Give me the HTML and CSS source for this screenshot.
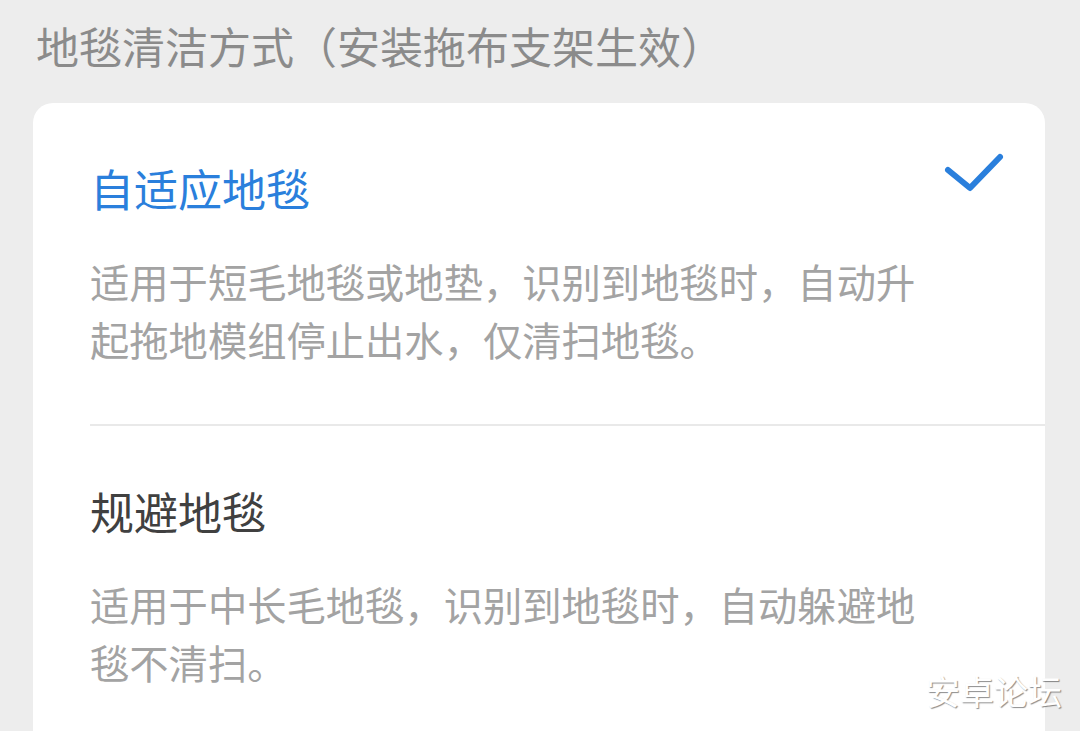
FILE: index.html
```html
<!DOCTYPE html>
<html lang="zh-CN">
<head>
<meta charset="utf-8">
<title>地毯清洁方式</title>
<link rel="stylesheet" href="styles.css">
</head>
<body>
<div class="page">
  <h1 class="section-title">地毯清洁方式（安装拖布支架生效）</h1>
  <div class="card">
    <div class="option">
      <div class="option-head">
        <span class="option-name selected">自适应地毯</span>
        <svg class="check" width="60" height="40" viewBox="0 0 60 40" aria-hidden="true">
          <polyline points="4,17 26,35 56,4" fill="none" stroke="#2a7fdc" stroke-width="6" stroke-linecap="round" stroke-linejoin="round"/>
        </svg>
      </div>
      <p class="option-desc">适用于短毛地毯或地垫，识别到地毯时，自动升起拖地模组停止出水，仅清扫地毯。</p>
    </div>
    <div class="divider"></div>
    <div class="option">
      <div class="option-head">
        <span class="option-name">规避地毯</span>
      </div>
      <p class="option-desc">适用于中长毛地毯，识别到地毯时，自动躲避地毯不清扫。</p>
    </div>
  </div>
  <div class="watermark">安卓论坛</div>
</div>
</body>
</html>
```

FILE: styles.css
```css
html, body {
  margin: 0;
  padding: 0;
  height: 731px;
  overflow: hidden;
  background: #ededed;
  font-family: "Noto Sans CJK SC", "Noto Sans", sans-serif;
}

.page {
  position: relative;
  height: 731px;
  overflow: hidden;
}

.section-title {
  margin: 0;
  padding: 15px 0 0 36px;
  font-size: 43px;
  line-height: 60px;
  font-weight: 400;
  color: #8b8b8b;
  white-space: nowrap;
}

.card {
  margin: 28px 0 0 33px;
  width: 1012px;
  background: #ffffff;
  border-radius: 20px 20px 0 0;
  padding-bottom: 80px;
}

.option {
  padding: 55px 42px 56px 57px;
}

.option + .divider + .option {
  padding-top: 55px;
}

.option-head {
  display: flex;
  justify-content: space-between;
  align-items: flex-start;
  height: 60px;
}

.option-name {
  font-size: 44px;
  line-height: 60px;
  color: #404040;
}

.option-name.selected {
  color: #2a7fdc;
}

.check {
  display: block;
  margin-top: -5px;
  margin-right: -1px;
}

.option-desc {
  margin: 34px 0 0;
  max-width: 840px;
  font-size: 39.3px;
  line-height: 58px;
  color: #a3a3a3;
}

.divider {
  margin-left: 57px;
  height: 2px;
  background: #e9e9e9;
}

.watermark {
  position: absolute;
  right: 18px;
  bottom: 20px;
  font-size: 34px;
  line-height: 40px;
  color: #ffffff;
  text-shadow: 1px 1px 1px rgba(0, 0, 0, 0.45);
}
```
